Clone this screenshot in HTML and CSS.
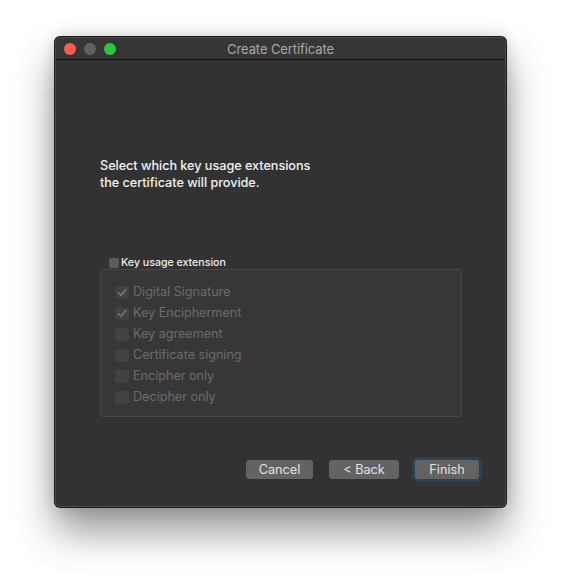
FILE: index.html
```html
<!DOCTYPE html>
<html>
<head>
<meta charset="utf-8">
<link rel="stylesheet" href="styles.css">
</head>
<body>
<div class="window">
  <div class="titlebar">
    <div class="lights">
      <span class="light red"></span>
      <span class="light gray"></span>
      <span class="light green"></span>
    </div>
    <div class="title">Create Certificate</div>
  </div>
  <div class="content">
    <p class="intro">Select which key usage extensions<br>the certificate will provide.</p>
    <label class="group-toggle"><span class="box small"></span>Key usage extension</label>
    <div class="group">
      <div class="item"><span class="box checked"><svg viewBox="0 0 14 13" width="14" height="13"><path d="M3.5 6.8 L6 9.3 L10.8 3.6" fill="none" stroke="#777" stroke-width="1.6" stroke-linecap="round" stroke-linejoin="round"/></svg></span>Digital Signature</div>
      <div class="item"><span class="box checked"><svg viewBox="0 0 14 13" width="14" height="13"><path d="M3.5 6.8 L6 9.3 L10.8 3.6" fill="none" stroke="#777" stroke-width="1.6" stroke-linecap="round" stroke-linejoin="round"/></svg></span>Key Encipherment</div>
      <div class="item"><span class="box"></span>Key agreement</div>
      <div class="item"><span class="box"></span>Certificate signing</div>
      <div class="item"><span class="box"></span>Encipher only</div>
      <div class="item"><span class="box"></span>Decipher only</div>
    </div>
    <div class="buttons">
      <button class="btn cancel">Cancel</button>
      <button class="btn back">&lt; Back</button>
      <button class="btn finish">Finish</button>
    </div>
  </div>
</div>
</body>
</html>
```

FILE: styles.css
```css
html, body {
  margin: 0;
  padding: 0;
  background: #ffffff;
}
body {
  padding: 37px 0 0 55px;
  min-height: 581px;
  box-sizing: border-box;
  font-family: Inter, "Liberation Sans", sans-serif;
}
.window {
  width: 451px;
  height: 470px;
  box-sizing: border-box;
  background: #323232;
  border-radius: 5px;
  border: 1px solid #4a4a4a;
  box-shadow: 0 0 0 1px #1a1a1a, 0 24px 40px rgba(0,0,0,0.42), 0 0 16px rgba(0,0,0,0.18);
  overflow: hidden;
  display: flex;
  flex-direction: column;
}
.titlebar {
  height: 21px;
  flex: none;
  background: #363636;
  border-bottom: 1px solid #141414;
  position: relative;
  display: flex;
  align-items: center;
  justify-content: center;
}
.lights {
  position: absolute;
  left: 8px;
  top: 5px;
  display: flex;
  gap: 8px;
}
.light {
  width: 12px;
  height: 12px;
  border-radius: 50%;
  display: block;
}
.red { background: #fe5b52; }
.gray { background: #626262; }
.green { background: #2ac840; }
.title {
  color: #a9a9a9;
  font-size: 13px;
  letter-spacing: -0.1px;
}
.content {
  padding: 97px 0 0 44px;
  display: flex;
  flex-direction: column;
}
.intro {
  margin: 0;
  color: #f2f2f2;
  font-size: 12.7px;
  font-weight: 500;
  line-height: 17px;
  letter-spacing: -0.05px;
}
.group-toggle {
  margin: 66px 0 0 9px;
  display: flex;
  align-items: center;
  gap: 2px;
  color: #eeeeee;
  font-size: 10.6px;
  font-weight: 500;
  line-height: 12px;
}
.box {
  width: 14px;
  height: 13px;
  box-sizing: border-box;
  border-radius: 3px;
  background: #424242;
  flex: none;
  display: flex;
  align-items: center;
  justify-content: center;
}
.box.small {
  width: 10px;
  height: 10px;
  border-radius: 2px;
  background: #5c5c5c;
}
.group {
  margin-top: 0;
  width: 362px;
  height: 148px;
  box-sizing: border-box;
  background: #373737;
  border: 1px solid #474747;
  border-radius: 3px;
  padding: 14px 0 0 14px;
  display: flex;
  flex-direction: column;
  gap: 5px;
}
.item {
  display: flex;
  align-items: center;
  gap: 4px;
  color: #6c6c6c;
  font-size: 12.7px;
  line-height: 16px;
  letter-spacing: -0.05px;
}
.buttons {
  margin: 43px 0 0 146px;
  display: flex;
  gap: 16px;
  align-items: center;
}
.btn {
  height: 19px;
  box-sizing: border-box;
  background: #636363;
  color: #e2e2e2;
  border: none;
  border-radius: 3px;
  font-family: Inter, "Liberation Sans", sans-serif;
  font-size: 12.7px;
  padding: 0;
  line-height: 19px;
}
.cancel { width: 67px; }
.back { width: 70px; }
.finish {
  width: 64px;
  box-shadow: 0 0 0 3px #2a4354;
}
```
